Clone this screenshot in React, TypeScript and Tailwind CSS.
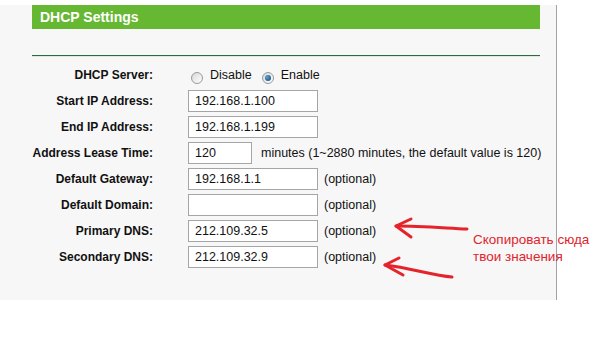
import React from "react";

type Row = {
  label: string;
  value?: string;
  narrow?: boolean;
  note?: string;
};

const rows: Row[] = [
  { label: "Start IP Address:", value: "192.168.1.100" },
  { label: "End IP Address:", value: "192.168.1.199" },
  { label: "Address Lease Time:", value: "120", narrow: true, note: "minutes (1~2880 minutes, the default value is 120)" },
  { label: "Default Gateway:", value: "192.168.1.1", note: "(optional)" },
  { label: "Default Domain:", value: "", note: "(optional)" },
  { label: "Primary DNS:", value: "212.109.32.5", note: "(optional)" },
  { label: "Secondary DNS:", value: "212.109.32.9", note: "(optional)" },
];

function Radio({ checked }: { checked?: boolean }) {
  return (
    <span className="mt-[5px] inline-flex h-[12px] w-[12px] items-center justify-center rounded-full border border-[#9a9a9a] bg-[linear-gradient(135deg,#d8d8d8,#ffffff)]">
      {checked && <span className="h-[6px] w-[6px] rounded-full bg-[radial-gradient(circle_at_35%_35%,#5fa3d6,#0d3f66)]" />}
    </span>
  );
}

export default function App() {
  return (
    <div className="relative h-[360px] w-[614px] overflow-hidden bg-white font-['Liberation_Sans',Arial,sans-serif] text-[#111]">
      <div className="h-[295px] w-[557px] border-r border-[#a3a3a3] bg-[#f7f7f7] pl-[32px]">
        <div className="mt-[5px] flex h-[24px] w-[508px] items-center bg-[#66b732] pl-[8px] text-[14px] font-bold text-white">
          DHCP Settings
        </div>
        <div className="mt-[26px] h-[1px] w-[508px] bg-[#2d6b3c]" />
        <div className="h-[1px] w-[508px] bg-[#dfe8e0]" />

        <div className="mt-[5px] flex flex-col">
          <div className="flex h-[26px] items-center">
            <div className="w-[121px] text-right text-[12px] font-bold">DHCP Server:</div>
            <div className="ml-[38px] flex items-center text-[12.5px]">
              <Radio />
              <span className="ml-[7px]">Disable</span>
              <span className="ml-[10px] flex"><Radio checked /></span>
              <span className="ml-[7px]">Enable</span>
            </div>
          </div>

          {rows.map((r) => (
            <div key={r.label} className="flex h-[26px] items-center">
              <div className="w-[121px] text-right text-[12px] font-bold">{r.label}</div>
              <div
                className={`ml-[35px] flex h-[22px] items-center border border-[#a5a5a5] bg-white pl-[6px] text-[12.5px] ${
                  r.narrow ? "w-[64px]" : "w-[130px]"
                }`}
              >
                {r.value}
              </div>
              {r.note && (
                <span className={`text-[12.5px] ${r.narrow ? "ml-[9px]" : "ml-[6px]"}`}>{r.note}</span>
              )}
            </div>
          ))}
        </div>
      </div>

      <svg className="pointer-events-none absolute left-0 top-0" width="614" height="360" viewBox="0 0 614 360" fill="none">
        <g stroke="#e5232b" strokeWidth="3" strokeLinecap="round" strokeLinejoin="round">
          <path d="M467 229 C 445 228, 420 226, 396 226" />
          <path d="M411 219 L396 226 L411 237" />
          <path d="M452 277 C 432 275, 410 268, 385 265" />
          <path d="M399 258 L385 265 L403 275" />
        </g>
      </svg>

      <div className="absolute left-[473px] top-[231px] text-[13.5px] leading-[17px] text-[#e0242c]">
        <div>Скопировать сюда</div>
        <div>твои значения</div>
      </div>
    </div>
  );
}
